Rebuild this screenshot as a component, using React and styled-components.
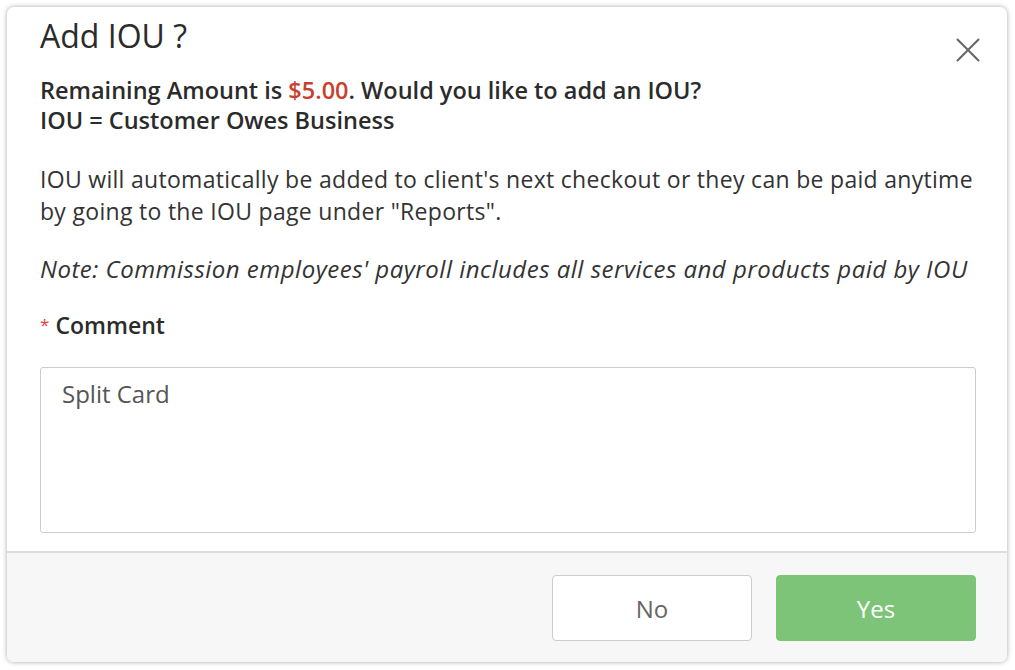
import React, { useState } from 'react'
import styled, { createGlobalStyle } from 'styled-components'

const GlobalStyle = createGlobalStyle`
    html, body {
        margin: 0;
        padding: 0;
        background: #ffffff;
    }
    body {
        font-family: "Open Sans", Lato, "Liberation Sans", sans-serif;
        color: #333333;
    }
`

const App = () => {

    const [comment, setComment] = useState("Split Card");

    return (
        <>
            <GlobalStyle />
            <Page>
                <Modal>
                    <Body>
                        <Header>
                            <Title>Add IOU ?</Title>
                            <CloseButton aria-label='Close'>
                                <svg width="24" height="24" viewBox="0 0 24 24">
                                    <path d="M1.5 1.5 L22.5 22.5 M22.5 1.5 L1.5 22.5" stroke="#666" strokeWidth="2" strokeLinecap="round" fill="none" />
                                </svg>
                            </CloseButton>
                        </Header>
                        <Lead>
                            Remaining Amount is <Amount>$5.00</Amount>. Would you like to add an IOU?
                            <br />
                            IOU = Customer Owes Business
                        </Lead>
                        <Paragraph>
                            IOU will automatically be added to client's next checkout or they can be paid anytime by going to the IOU page under "Reports".
                        </Paragraph>
                        <Paragraph italic>
                            Note: Commission employees' payroll includes all services and products paid by IOU
                        </Paragraph>
                        <Label>
                            <Required>*</Required>Comment
                        </Label>
                        <CommentBox value={comment} onChange={(e) => setComment(e.target.value)} />
                    </Body>
                    <Footer>
                        <Button>No</Button>
                        <Button primary>Yes</Button>
                    </Footer>
                </Modal>
            </Page>
        </>
    )
}

const Page = styled.div`
    padding: 7px 8px 8px 7px;
`

const Modal = styled.div`
    width: 1000px;
    height: 655px;
    display: flex;
    flex-direction: column;
    background-color: white;
    border-radius: 7px;
    box-shadow: 0 0 5px rgba(0, 0, 0, 0.35);
    overflow: hidden;
`

const Body = styled.div`
    padding: 10px 31px 18px 33px;
    display: flex;
    flex-direction: column;
`

const Header = styled.div`
    height: 38px;
    display: flex;
    flex-direction: row;
    justify-content: space-between;
    align-items: flex-start;
`

const Title = styled.h2`
    margin: 0;
    font-size: 32px;
    font-weight: 400;
    line-height: 38px;
    color: #2b2b2b;
`

const CloseButton = styled.button`
    flex-shrink: 0;
    margin: 21px -4px 0 0;
    padding: 0;
    border: none;
    background: transparent;
    width: 24px;
    height: 24px;
    cursor: pointer;
`

const Lead = styled.div`
    margin-top: 20px;
    font-size: 23.5px;
    font-weight: 600;
    line-height: 30px;
    color: #2b2b2b;
`

const Amount = styled.span`
    color: #c9402e;
`

const Paragraph = styled.p`
    margin: 28px 0 0 0;
    font-size: ${props => props.italic ? '24px' : '23px'};
    line-height: 32px;
    font-style: ${props => props.italic ? 'italic' : 'normal'};
    letter-spacing: ${props => props.italic ? '0.5px' : '0.3px'};
    color: #333333;

    & + & {
        margin-top: 26px;
    }
`

const Label = styled.div`
    margin-top: 25px;
    font-size: 23px;
    font-weight: 600;
    line-height: 30px;
    color: #2b2b2b;
`

const Required = styled.span`
    color: #e0433a;
    font-size: 17px;
    font-weight: 400;
    margin-right: 6px;
    vertical-align: top;
`

const CommentBox = styled.textarea`
    margin-top: 27px;
    height: 166px;
    box-sizing: border-box;
    padding: 10px 21px;
    border: 1px solid #cccccc;
    border-radius: 3px;
    font-family: "Open Sans", Lato, "Liberation Sans", sans-serif;
    font-size: 24px;
    line-height: 32px;
    color: #555555;
    resize: none;
    outline: none;
`

const Footer = styled.div`
    flex: 1;
    display: flex;
    flex-direction: row;
    justify-content: flex-end;
    align-items: flex-start;
    gap: 24px;
    padding: 22px 31px 0 0;
    background-color: #f7f7f7;
    border-top: 2px solid #dddddd;
`

const Button = styled.button`
    width: 200px;
    height: 66px;
    border-radius: 4px;
    font-family: "Open Sans", Lato, "Liberation Sans", sans-serif;
    font-size: 24px;
    cursor: pointer;
    background-color: ${props => props.primary ? '#7dc478' : '#ffffff'};
    color: ${props => props.primary ? '#ffffff' : '#666666'};
    border: ${props => props.primary ? '1px solid #7dc478' : '1px solid #cccccc'};
`

export default App
